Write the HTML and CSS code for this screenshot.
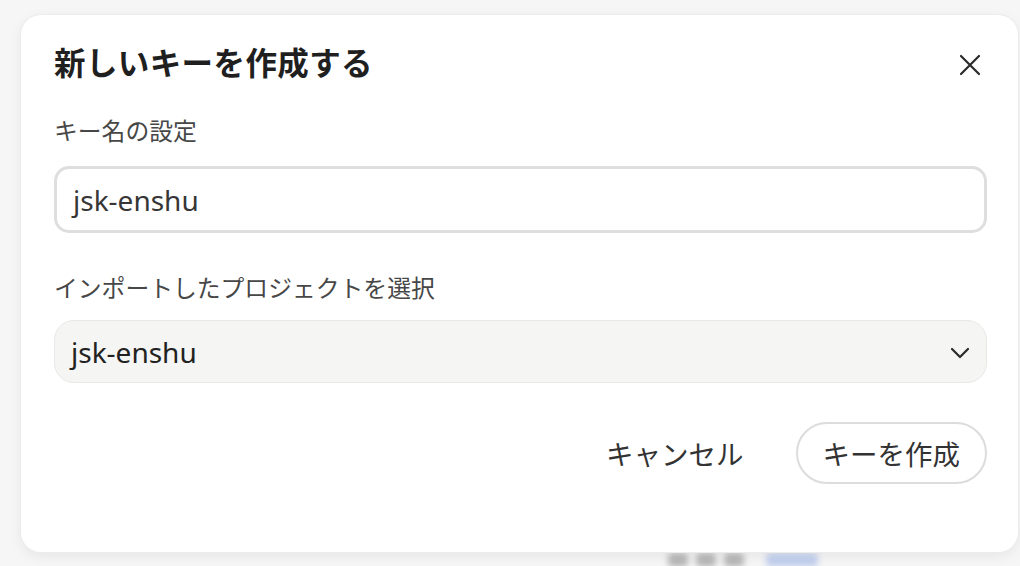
FILE: index.html
```html
<!DOCTYPE html>
<html lang="ja">
<head>
<meta charset="utf-8">
<title>新しいキーを作成する</title>
<link rel="stylesheet" href="styles.css">
</head>
<body>
<div class="behind" aria-hidden="true">
  <span class="blob blob-gray"></span>
  <span class="blob blob-gray"></span>
  <span class="blob blob-gray"></span>
  <span class="blob blob-blue"></span>
</div>
<div class="dialog" role="dialog">
  <div class="header">
    <h1 class="title">新しいキーを作成する</h1>
    <button class="close" aria-label="閉じる">
      <svg width="22" height="22" viewBox="0 0 22 22"><path d="M2 2 L20 20 M20 2 L2 20" stroke="#2a2a2a" stroke-width="2.2" stroke-linecap="round" fill="none"/></svg>
    </button>
  </div>
  <label class="label label-first">キー名の設定</label>
  <div class="input">jsk-enshu</div>
  <label class="label label-second">インポートしたプロジェクトを選択</label>
  <div class="select">
    <span>jsk-enshu</span>
    <svg class="chevron" width="20" height="12" viewBox="0 0 20 12"><path d="M2 2 L10 10 L18 2" stroke="#2a2a2a" stroke-width="2.2" stroke-linecap="round" stroke-linejoin="round" fill="none"/></svg>
  </div>
  <div class="actions">
    <button class="btn-cancel">キャンセル</button>
    <button class="btn-create">キーを作成</button>
  </div>
</div>
</body>
</html>
```
FILE: styles.css
```css
html, body {
  margin: 0;
  padding: 0;
}
body {
  width: 1020px;
  height: 566px;
  overflow: hidden;
  background: #f6f6f6;
  font-family: "Noto Sans", "Noto Sans CJK JP", sans-serif;
  position: relative;
}
.behind {
  position: absolute;
  left: 668px;
  top: 553px;
  display: flex;
  gap: 8px;
  filter: blur(3px);
}
.blob {
  display: block;
  height: 14px;
  border-radius: 4px;
}
.blob-gray {
  width: 20px;
  background: #b8b8b8;
}
.blob-blue {
  width: 52px;
  margin-left: 14px;
  background: #c3d0ee;
}
.dialog {
  position: relative;
  margin: 15px 0 0 21px;
  width: 997px;
  height: 537px;
  box-sizing: border-box;
  padding: 0 31px 0 33px;
  background: #ffffff;
  border-radius: 20px;
  box-shadow: 0 0 0 1px #ececec, 0 4px 14px rgba(0, 0, 0, 0.07);
}
.header {
  display: flex;
  align-items: center;
  justify-content: space-between;
  padding-top: 24px;
  height: 48px;
}
.title {
  margin: 0;
  font-size: 31.5px;
  font-weight: 700;
  line-height: 48px;
  color: #1f1f1f;
  letter-spacing: 0.4px;
}
.close {
  width: 30px;
  height: 30px;
  padding: 0;
  margin: 4px 2px 0 0;
  border: none;
  background: none;
  display: flex;
  align-items: center;
  justify-content: center;
}
.label {
  display: block;
  font-size: 23.8px;
  line-height: 32px;
  color: #474747;
}
.label-first {
  margin-top: 28px;
}
.label-second {
  margin-top: 39px;
}
.input {
  margin-top: 19px;
  height: 67px;
  box-sizing: border-box;
  border: 3px solid #dedede;
  border-radius: 15px;
  padding: 0 16px;
  display: flex;
  align-items: center;
  font-size: 28px;
  color: #363636;
}
.select {
  margin-top: 16px;
  height: 63px;
  box-sizing: border-box;
  border: 1.5px solid #e8e8e6;
  background: #f5f5f3;
  border-radius: 20px;
  padding: 0 16px 0 16px;
  display: flex;
  align-items: center;
  justify-content: space-between;
  font-size: 28px;
  color: #222222;
}
.chevron {
  margin-top: 2px;
}
.actions {
  margin-top: 39px;
  display: flex;
  justify-content: flex-end;
  align-items: center;
  gap: 26px;
}
.btn-cancel {
  height: 61px;
  padding: 0 26px;
  border: none;
  background: none;
  font-family: inherit;
  font-size: 27.5px;
  color: #333333;
}
.btn-create {
  height: 62px;
  padding: 0 25px;
  border: 2px solid #dcdcdc;
  border-radius: 31px;
  background: #ffffff;
  font-family: inherit;
  font-size: 27.5px;
  color: #333333;
}
```
